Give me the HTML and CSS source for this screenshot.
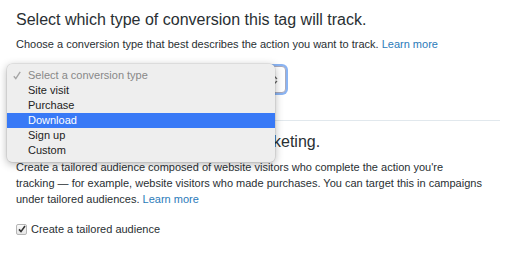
FILE: index.html
```html
<!DOCTYPE html>
<html>
<head>
<meta charset="utf-8">
<title>Conversion tag</title>
<link rel="stylesheet" href="styles.css">
</head>
<body>
<div class="page">
    <h2 class="title">Select which type of conversion this tag will track.</h2>
    <p class="hint">Choose a conversion type that best describes the action you want to track. <a href="#">Learn more</a></p>

    <div class="select_wrap">
        <div class="select">
            <svg class="arrows" width="7" height="10" viewBox="0 0 7 10"><path d="M1 4 L3.5 1.5 L6 4 M1 6 L3.5 8.5 L6 6" fill="none" stroke="#666" stroke-width="1.3"/></svg>
        </div>
        <ul class="menu">
            <li class="placeholder"><svg class="tick" width="8" height="9" viewBox="0 0 8 9"><path d="M0.8 5.2 L2.8 7.6 L7.2 0.8" fill="none" stroke="#a5a5a5" stroke-width="1.4"/></svg>Select a conversion type</li>
            <li>Site visit</li>
            <li>Purchase</li>
            <li class="active">Download</li>
            <li>Sign up</li>
            <li>Custom</li>
        </ul>
    </div>

    <div class="rule"></div>

    <h2 class="title second">Create a tailored audience for remarketing.</h2>
    <p class="text">Create a tailored audience composed of website visitors who complete the action you're tracking — for example, website visitors who made purchases. You can target this in campaigns under tailored audiences. <a href="#">Learn more</a></p>

    <label class="check">
        <span class="box"><svg width="8" height="8" viewBox="0 0 8 8"><path d="M1 4.4 L3 6.6 L7 1" fill="none" stroke="#333" stroke-width="1.6"/></svg></span>
        Create a tailored audience
    </label>
</div>
</body>
</html>
```

FILE: styles.css
```css
body { margin: 0; background: #fff; font-family: "Liberation Sans", Arial, sans-serif; color: #292f33; }
a { color: #2b7bb9; text-decoration: none; }
ul { margin: 0; padding: 0; } li { list-style: none; }

.page { width: 484px; padding: 10px 0 0 16px; }
.title { margin: 0; font-size: 16px; font-weight: normal; line-height: 20px; }
.hint { margin: 6px 0 0; font-size: 11px; line-height: 16px; }

.select_wrap { position: relative; width: 270px; margin-top: 14px; }
.select { height: 25px; border: 1px solid #aab; border-radius: 4px; background: #fff; box-shadow: 0 0 0 2px #8ab4f3; position: relative; }
.select .arrows { position: absolute; right: 7px; top: 8px; }

.menu { position: absolute; left: -9px; top: -2px; width: 268px; padding: 4px 0; background: #eeeeee; border-radius: 5px; box-shadow: 0 2px 9px rgba(0,0,0,0.3), 0 0 0 0.5px rgba(0,0,0,0.12); z-index: 10; font-size: 11px; color: #222; }
.menu li { height: 15px; line-height: 15px; padding-left: 21px; position: relative; }
.menu .placeholder { color: #888; }
.menu .tick { position: absolute; left: 6px; top: 3px; }
.menu .active { background: #3879f6; color: #fff; }

.rule { height: 1px; background: #e1e8ed; margin-top: 27px; }
.second { margin-top: 11px; }
.text { margin: 7px 0 0; font-size: 11px; line-height: 16px; width: 467px; }

.check { display: flex; align-items: center; gap: 4px; margin-top: 14px; font-size: 11px; line-height: 16px; }
.check .box { width: 9px; height: 9px; border: 1px solid #b5b5b5; border-radius: 2px; background: linear-gradient(#fafafa, #e6e6e6); display: flex; align-items: center; justify-content: center; }
```
